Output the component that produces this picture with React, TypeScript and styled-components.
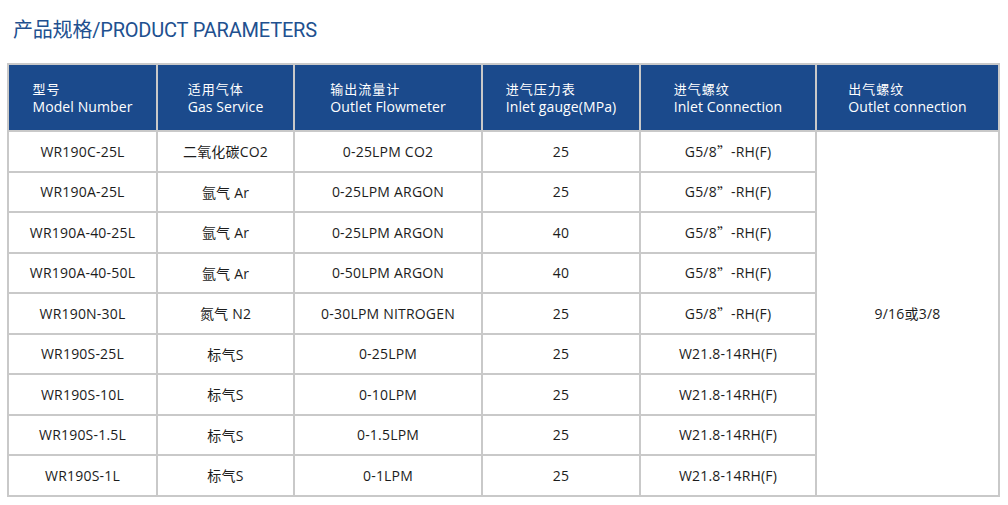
import React from "react";
import styled, { createGlobalStyle } from "styled-components";

const Global = createGlobalStyle`
  html, body { margin: 0; padding: 0; background: #ffffff; }
  body { font-family: "Open Sans", "Noto Sans CJK SC", sans-serif; }
`;

const Page = styled.div`
  width: 1008px;
  height: 505px;
  padding: 19px 0 0 7px;
  box-sizing: border-box;
  overflow: hidden;
`;

const Title = styled.h1`
  margin: 0 0 22px 6px;
  font-family: Roboto, "Noto Sans CJK SC", sans-serif;
  font-weight: 400;
  font-size: 20px;
  line-height: 22px;
  color: #21508f;
  letter-spacing: -0.2px;
`;

const Grid = styled.div`
  display: grid;
  width: max-content;
  grid-template-columns: 147px 135px 186px 156px 174px 181px;
  grid-template-rows: 65px repeat(9, 38.5px);
  gap: 2px;
  padding: 2px;
  background: #c9c9c9;
`;

const Head = styled.div`
  background: #1b4a8c;
  color: #ffffff;
  display: flex;
  align-items: center;
  justify-content: center;
`;

const HeadText = styled.div`
  display: flex;
  flex-direction: column;
  align-items: flex-start;
`;

const HeadCn = styled.span`
  font-family: "Noto Sans CJK SC", sans-serif;
  font-size: 13px;
  line-height: 18px;
  letter-spacing: 1px;
`;

const HeadEn = styled.span`
  font-family: "Open Sans", sans-serif;
  font-size: 14px;
  line-height: 18px;
  letter-spacing: 0.1px;
`;

const Cell = styled.div<{ $span?: number }>`
  background: #ffffff;
  color: #1c1c1c;
  display: flex;
  align-items: center;
  justify-content: center;
  font-family: "Open Sans", "Noto Sans CJK SC", sans-serif;
  font-size: 14px;
  letter-spacing: 0.2px;
  white-space: nowrap;
  ${(p) => (p.$span ? `grid-row: span ${p.$span};` : "")}
`;

const Quote = styled.span`
  font-family: "Noto Sans CJK SC", sans-serif;
`;

const headers = [
  ["型号", "Model Number"],
  ["适用气体", "Gas Service"],
  ["输出流量计", "Outlet Flowmeter"],
  ["进气压力表", "Inlet gauge(MPa)"],
  ["进气螺纹", "Inlet Connection"],
  ["出气螺纹", "Outlet connection"],
];

const rows = [
  ["WR190C-25L", "二氧化碳CO2", "0-25LPM CO2", "25", "G"],
  ["WR190A-25L", "氩气 Ar", "0-25LPM ARGON", "25", "G"],
  ["WR190A-40-25L", "氩气 Ar", "0-25LPM ARGON", "40", "G"],
  ["WR190A-40-50L", "氩气 Ar", "0-50LPM ARGON", "40", "G"],
  ["WR190N-30L", "氮气 N2", "0-30LPM NITROGEN", "25", "G"],
  ["WR190S-25L", "标气S", "0-25LPM", "25", "W"],
  ["WR190S-10L", "标气S", "0-10LPM", "25", "W"],
  ["WR190S-1.5L", "标气S", "0-1.5LPM", "25", "W"],
  ["WR190S-1L", "标气S", "0-1LPM", "25", "W"],
];

export default function App() {
  return (
    <>
      <Global />
      <Page>
        <Title>产品规格/PRODUCT PARAMETERS</Title>
        <Grid>
          {headers.map(([cn, en]) => (
            <Head key={en}>
              <HeadText>
                <HeadCn>{cn}</HeadCn>
                <HeadEn>{en}</HeadEn>
              </HeadText>
            </Head>
          ))}
          {rows.map((r, i) => (
            <React.Fragment key={r[0]}>
              <Cell>{r[0]}</Cell>
              <Cell>{r[1]}</Cell>
              <Cell>{r[2]}</Cell>
              <Cell>{r[3]}</Cell>
              <Cell>
                {r[4] === "G" ? (
                  <>
                    G5/8<Quote>”</Quote>-RH(F)
                  </>
                ) : (
                  "W21.8-14RH(F)"
                )}
              </Cell>
              {i === 0 && <Cell $span={9}>9/16或3/8</Cell>}
            </React.Fragment>
          ))}
        </Grid>
      </Page>
    </>
  );
}
